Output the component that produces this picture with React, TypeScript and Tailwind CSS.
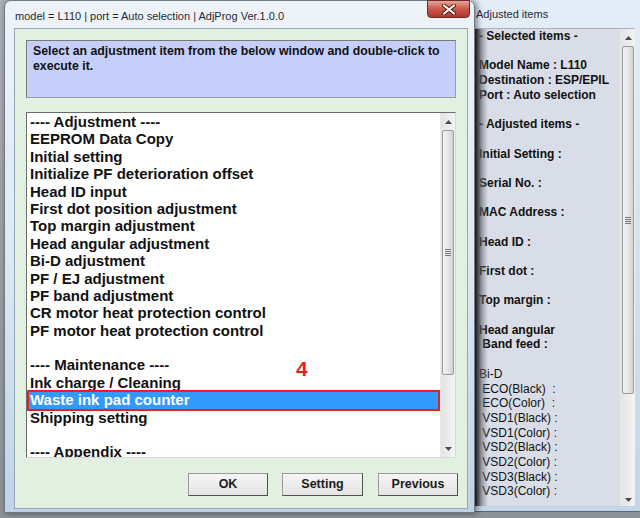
import React from 'react';

const listItems = [
  '---- Adjustment ----',
  'EEPROM Data Copy',
  'Initial setting',
  'Initialize PF deterioration offset',
  'Head ID input',
  'First dot position adjustment',
  'Top margin adjustment',
  'Head angular adjustment',
  'Bi-D adjustment',
  'PF / EJ adjustment',
  'PF band adjustment',
  'CR motor heat protection control',
  'PF motor heat protection control',
  '',
  '---- Maintenance ----',
  'Ink charge / Cleaning',
  'Waste ink pad counter',
  'Shipping setting',
  '',
  '---- Appendix ----',
];

const adjusted: { text: string; bold?: boolean }[] = [
  { text: '- Selected items -', bold: true },
  { text: '' },
  { text: 'Model Name : L110', bold: true },
  { text: 'Destination : ESP/EPIL', bold: true },
  { text: 'Port : Auto selection', bold: true },
  { text: '' },
  { text: '- Adjusted items -', bold: true },
  { text: '' },
  { text: 'Initial Setting :', bold: true },
  { text: '' },
  { text: 'Serial No. :', bold: true },
  { text: '' },
  { text: 'MAC Address :', bold: true },
  { text: '' },
  { text: 'Head ID :', bold: true },
  { text: '' },
  { text: 'First dot :', bold: true },
  { text: '' },
  { text: 'Top margin :', bold: true },
  { text: '' },
  { text: 'Head angular', bold: true },
  { text: ' Band feed :', bold: true },
  { text: '' },
  { text: 'Bi-D' },
  { text: ' ECO(Black)  :' },
  { text: ' ECO(Color)  :' },
  { text: ' VSD1(Black) :' },
  { text: ' VSD1(Color) :' },
  { text: ' VSD2(Black) :' },
  { text: ' VSD2(Color) :' },
  { text: ' VSD3(Black) :' },
  { text: ' VSD3(Color) :' },
];

function Arrow({ down }: { down?: boolean }) {
  return (
    <svg width="7" height="4" viewBox="0 0 7 4">
      {down ? <path d="M0 0h7L3.5 4z" fill="#4a4a4a" /> : <path d="M0 4h7L3.5 0z" fill="#4a4a4a" />}
    </svg>
  );
}

function Scrollbar({ thumb, rest }: { thumb: number; rest: number }) {
  return (
    <div className="w-[15px] flex flex-col bg-gradient-to-r from-[#e3e3e3] to-[#f4f4f4] border-l border-[#e8e8e8]">
      <div className="h-[17px] flex items-center justify-center">
        <Arrow />
      </div>
      <div
        className="mx-[1px] rounded-[2px] border border-[#9b9b9b] bg-gradient-to-r from-[#f3f3f3] via-[#e6e6e6] to-[#d2d2d2] flex flex-col items-center justify-center gap-[1px]"
        style={{ height: thumb }}
      >
        <div className="w-[6px] h-[1px] bg-[#7a7a7a]" />
        <div className="w-[6px] h-[1px] bg-[#7a7a7a]" />
        <div className="w-[6px] h-[1px] bg-[#7a7a7a]" />
        <div className="w-[6px] h-[1px] bg-[#7a7a7a]" />
      </div>
      <div style={{ height: rest }} />
      <div className="flex-1 flex items-center justify-center">
        <Arrow down />
      </div>
    </div>
  );
}

function Button({ label, width }: { label: string; width: number }) {
  return (
    <div
      className="h-[23px] flex items-center justify-center border border-[#9a9a9a] border-r-[#505050] border-b-[#505050] bg-gradient-to-b from-[#f6f6f6] to-[#e4e4e4] text-[12.5px] font-bold text-[#1c1c1c]"
      style={{ width }}
    >
      {label}
    </div>
  );
}

export default function App() {
  return (
    <div
      className="relative w-[640px] h-[518px] overflow-hidden bg-gradient-to-b from-[#aab0b6] to-[#8d9297]"
      style={{ fontFamily: '"Liberation Sans", Arial, sans-serif' }}
    >
      {/* Adjusted items window */}
      <div className="absolute left-[470px] top-0 w-[175px] h-[512px] bg-gradient-to-b from-[#e4eef8] to-[#c3d6e9] pl-[5px] pb-[5px] flex flex-col border-b border-[#5c6670]">
        <div
          className="h-[28px] flex items-center pl-[1px] text-[11px] text-[#1e2b3a]"
          style={{ fontFamily: '"Liberation Sans", Arial, sans-serif' }}
        >
          Adjusted items
        </div>
        <div className="relative flex-1 w-[160px] flex bg-[#d9dde7] border-t border-[#a7b2bd]">
          <div className="flex-1 pl-[4px] text-[12px] leading-[14.7px] text-[#111]">
            {adjusted.map((l, i) => (
              <div key={i} className={`whitespace-pre h-[14.7px] ${l.bold ? 'font-bold' : 'font-normal'}`}>
                {l.text}
              </div>
            ))}
          </div>
          <Scrollbar thumb={348} rest={99} />
          <div className="absolute left-0 top-0 bottom-0 w-[13px] bg-gradient-to-r from-[#262626] via-[#6e7075]/60 to-transparent" />
        </div>
      </div>

      {/* Main AdjProg window */}
      <div className="absolute left-[4px] top-0 z-10 w-[471px] h-[513px] rounded-t-[7px] border border-[#6f7a86] bg-gradient-to-b from-[#eef3f8] via-[#dfe8f1] to-[#bfd3e7] flex flex-col shadow-[2px_0_6px_rgba(0,0,0,0.5)]">
        <div className="h-[27px] flex">
          <div
            className="flex-1 pl-[10px] pt-[7px] text-[11px] text-[#1e2b3a]"
            style={{ fontFamily: '"Liberation Sans", Arial, sans-serif' }}
          >
            model = L110 | port = Auto selection | AdjProg Ver.1.0.0
          </div>
          <div className="mr-[4px] -mt-[1px] w-[43px] h-[18px] rounded-b-[4px] border border-[#6b2a2a] bg-gradient-to-b from-[#e6a496] via-[#c9584a] to-[#b0382c] flex items-center justify-center">
            <svg width="14" height="11" viewBox="0 0 14 11">
              <path d="M2 1.5l10 8M12 1.5l-10 8" stroke="#4a1a14" strokeWidth="4" strokeLinecap="round" />
              <path d="M2 1.5l10 8M12 1.5l-10 8" stroke="#ffffff" strokeWidth="2.2" strokeLinecap="round" />
            </svg>
          </div>
        </div>

        <div className="ml-[9px] mr-[6px] h-[481px] border border-[#95a6b6] bg-[#e2f0e2] px-[11px] pt-[11px] flex flex-col">
          <div className="h-[58px] border border-[#9c9c9c] border-t-[#7a7a7a] border-l-[#7a7a7a] bg-[#c6cefa] px-[6px] pt-[3px] text-[12.3px] leading-[15px] font-bold text-[#111]">
            Select an adjustment item from the below window and double-click to execute it.
          </div>

          <div className="mt-[14px] h-[346px] flex border border-[#d8d8d8] border-t-[#6a6a6a] border-l-[#6a6a6a] bg-white">
            <div className="relative flex-1 overflow-hidden text-[15px] leading-[17.4px] font-bold text-[#111]">
              {listItems.map((t, i) =>
                i === 16 ? (
                  <div key={i} className="relative h-[17.4px] pl-[3px] bg-[#3399ff] text-white whitespace-pre">
                    {t}
                    <span className="absolute left-0 -top-[1px] -bottom-[2px] right-0 border-2 border-[#ee1c25]" />
                  </div>
                ) : (
                  <div key={i} className="h-[17.4px] pl-[3px] whitespace-pre">
                    {t}
                  </div>
                ),
              )}
              <span className="absolute left-[269px] top-[245px] text-[21px] leading-[21px] font-bold text-[#ee1c25]">
                4
              </span>
            </div>
            <Scrollbar thumb={245} rest={66} />
          </div>

          <div className="mt-[15px] -mr-[2px] flex justify-end gap-[14px]">
            <Button label="OK" width={80} />
            <Button label="Setting" width={81} />
            <div className="ml-[1px]">
              <Button label="Previous" width={80} />
            </div>
          </div>
        </div>
      </div>
    </div>
  );
}
